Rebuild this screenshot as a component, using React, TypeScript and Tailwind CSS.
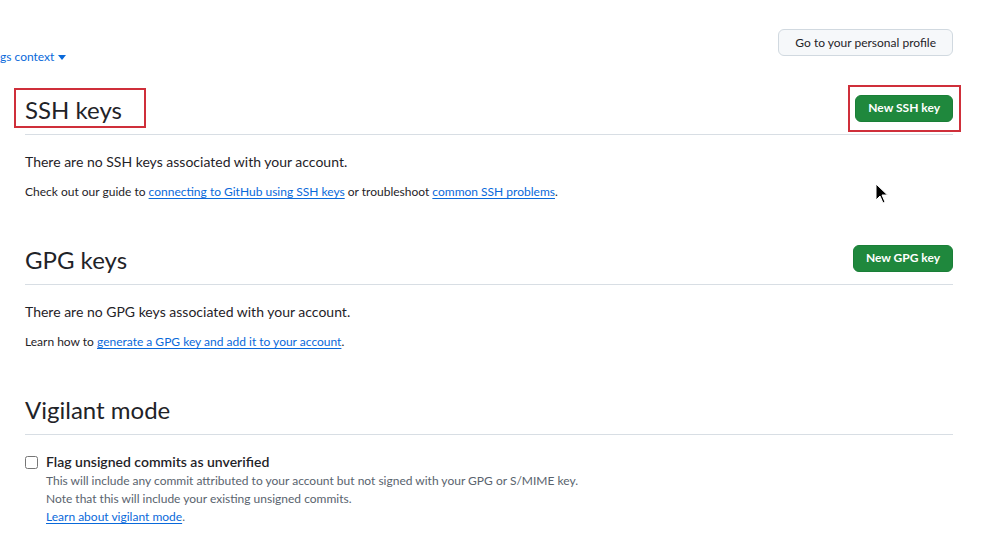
import React from "react";

const font = {
  fontFamily: 'Lato, "Liberation Sans", Arial, sans-serif',
};

const SectionHead = ({
  title,
  action,
  boxTitle,
  boxAction,
}: {
  title: string;
  action?: string;
  boxTitle?: boolean;
  boxAction?: boolean;
}) => {
  const heading = (
    <h2 className="text-[24px] leading-[36px] pt-[2px] -mb-[2px] font-normal text-[#1f2328]">{title}</h2>
  );
  const button = action && (
    <button className="h-[27px] px-[12px] rounded-md bg-[#1f883d] text-white text-[12px] font-bold border border-[#1a7f37]">
      {action}
    </button>
  );
  return (
    <div className="flex items-center justify-between pb-[8px] border-b border-[#d8dee4] mb-[16px]">
      {boxTitle ? (
        <div className="-ml-[11px] -my-[2px] pl-[9px] pr-[22px] border-2 border-[#cf2f3a]">{heading}</div>
      ) : (
        heading
      )}
      {button &&
        (boxAction ? (
          <div className="-mr-[8px] -my-[10px] pl-[5px] pr-[6px] py-[8px] border-2 border-[#cf2f3a] flex">
            {button}
          </div>
        ) : (
          button
        ))}
    </div>
  );
};

const A = ({ children }: { children: React.ReactNode }) => (
  <a className="text-[#0969da] underline underline-offset-[2px] decoration-[#0969da]">{children}</a>
);

export default function App() {
  return (
    <div className="relative w-[983px] h-[551px] bg-white overflow-hidden" style={font}>
      <div className="flex items-start justify-between pt-[29px] pr-[30px]">
        <div className="mt-[19px] flex items-center gap-[4px] text-[12px] text-[#0969da]">
          <span>gs context</span>
          <svg width="8" height="5" viewBox="0 0 8 5">
            <path d="M0 0h8L4 5z" fill="#0969da" />
          </svg>
        </div>
        <button className="h-[27px] px-[16px] rounded-md bg-[#f6f8fa] border border-[#d1d9e0] text-[12px] text-[#1f2328]">
          Go to your personal profile
        </button>
      </div>

      <div className="pl-[25px] pr-[30px] pt-[24px]">
        <SectionHead title="SSH keys" action="New SSH key" boxTitle boxAction />
        <p className="text-[14px] leading-[21px] text-[#1f2328] mb-[11px]">
          There are no SSH keys associated with your account.
        </p>
        <p className="text-[12px] leading-[18px] text-[#1f2328]">
          Check out our guide to <A>connecting to GitHub using SSH keys</A> or troubleshoot{" "}
          <A>common SSH problems</A>.
        </p>

        <div className="mt-[39px]">
          <SectionHead title="GPG keys" action="New GPG key" />
        </div>
        <p className="text-[14px] leading-[21px] text-[#1f2328] mb-[11px]">
          There are no GPG keys associated with your account.
        </p>
        <p className="text-[12px] leading-[18px] text-[#1f2328]">
          Learn how to <A>generate a GPG key and add it to your account</A>.
        </p>

        <div className="mt-[39px]">
          <SectionHead title="Vigilant mode" />
        </div>
        <div className="flex items-start gap-[8px]">
          <input type="checkbox" className="mt-[5px] w-[13px] h-[13px]" />
          <div>
            <div className="text-[14px] leading-[21px] font-semibold text-[#1f2328]">
              Flag unsigned commits as unverified
            </div>
            <div className="text-[12px] leading-[18px] text-[#59636e]">
              This will include any commit attributed to your account but not signed with your GPG or S/MIME key.
              <br />
              Note that this will include your existing unsigned commits.
              <br />
              <A>Learn about vigilant mode</A>.
            </div>
          </div>
        </div>
      </div>

      <svg className="absolute left-[875px] top-[183px]" width="13" height="21" viewBox="0 0 13 21">
        <path d="M1 1v16l4-4 3 7 2-1-3-7h5.5z" fill="#000" stroke="#fff" strokeWidth="1" />
      </svg>
    </div>
  );
}
